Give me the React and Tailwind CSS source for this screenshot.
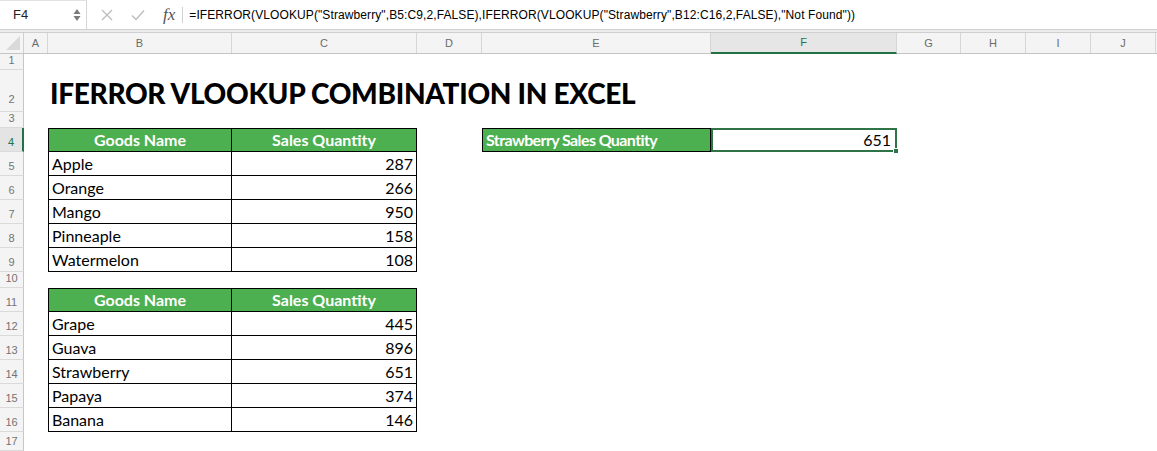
import React from "react";

const COLS = ["A", "B", "C", "D", "E", "F", "G", "H", "I", "J"];
const COLW = [
  "w-[24px]",
  "w-[184px]",
  "w-[185px]",
  "w-[65px]",
  "w-[229px]",
  "w-[186px]",
  "w-[64px]",
  "w-[65px]",
  "w-[65px]",
  "w-[65px]",
];

const table1 = [
  ["Apple", 287],
  ["Orange", 266],
  ["Mango", 950],
  ["Pinneaple", 158],
  ["Watermelon", 108],
];
const table2 = [
  ["Grape", 445],
  ["Guava", 896],
  ["Strawberry", 651],
  ["Papaya", 374],
  ["Banana", 146],
];

const sheetFont = { fontFamily: "Lato, 'Open Sans', sans-serif" };

function RowHeader({ label, h, active, tall }) {
  return (
    <div
      className={`${h} w-[24px] shrink-0 flex items-end justify-center text-[11px] leading-[16px] border-b border-[#dadada] ${
        tall ? "pb-[4px]" : "pb-[1px]"
      } ${
        active
          ? "bg-[#e4e4e4] text-[#217346] border-r-2 border-r-[#217346]"
          : "bg-[#f4f4f4] text-[#737373] border-r border-r-[#c6c6c6]"
      }`}
      style={{ fontFamily: "'Liberation Sans', Arial, sans-serif" }}
    >
      {label}
    </div>
  );
}

function EmptyCells({ from, to }) {
  const out = [];
  for (let i = from; i <= to; i++) {
    out.push(<div key={i} className={`${COLW[i]} shrink-0`} />);
  }
  return out;
}

function Row({ label, h, active, tall, children }) {
  return (
    <div className={`flex ${h}`}>
      <RowHeader label={label} h={h} active={active} tall={tall} />
      {children}
    </div>
  );
}

function HeaderCells() {
  return (
    <>
      <div className="w-[24px] shrink-0" />
      <div className="w-[184px] shrink-0 bg-[#4caf50] border border-black flex items-center justify-center text-white font-bold text-[16px]">
        Goods Name
      </div>
      <div className="w-[185px] shrink-0 bg-[#4caf50] border-y border-r border-black flex items-center justify-center text-white font-bold text-[16px]">
        Sales Quantity
      </div>
    </>
  );
}

function DataRow({ label, name, qty }) {
  return (
    <Row label={label} h="h-[24px]">
      <div className="w-[24px] shrink-0" />
      <div className="w-[184px] shrink-0 border-x border-b border-black flex items-center pl-[3px] text-[16px] text-black">
        {name}
      </div>
      <div className="w-[185px] shrink-0 border-r border-b border-black flex items-center justify-end pr-[3px] text-[16px] text-black">
        {qty}
      </div>
      <EmptyCells from={3} to={9} />
    </Row>
  );
}

function FormulaBar() {
  return (
    <div
      className="h-[30px] flex items-center bg-white border-b border-[#d0d0d0]"
      style={{ fontFamily: "'Liberation Sans', Arial, sans-serif" }}
    >
      <div className="w-[87px] h-full shrink-0 flex items-center justify-between pl-[13px] pr-[4px] border-r border-[#d6d6d6] border-t border-t-[#e2e2e2]">
        <span className="text-[13px] text-[#222]">F4</span>
        <svg width="10" height="16" viewBox="0 0 10 16">
          <path d="M5 2 L8.5 7 L1.5 7 Z" fill="#7a7a7a" />
          <path d="M5 14 L8.5 9 L1.5 9 Z" fill="#7a7a7a" />
        </svg>
      </div>
      <div className="flex items-center h-full">
        <svg className="ml-[14px]" width="12" height="12" viewBox="0 0 12 12">
          <path d="M1 1 L11 11 M11 1 L1 11" stroke="#bdbdbd" strokeWidth="1.4" />
        </svg>
        <svg className="ml-[18px]" width="14" height="12" viewBox="0 0 14 12">
          <path d="M1 6.5 L5 10.5 L13 1.5" stroke="#bdbdbd" strokeWidth="1.4" fill="none" />
        </svg>
        <span
          className="ml-[18px] text-[17px] italic text-[#555] leading-none"
          style={{ fontFamily: "'Liberation Serif', 'Times New Roman', serif" }}
        >
          fx
        </span>
        <div className="ml-[7px] h-[16px] w-px bg-[#d0d0d0]" />
        <span className="ml-[6px] text-[12px] text-black whitespace-nowrap tracking-[0.1px]">
          =IFERROR(VLOOKUP("Strawberry",B5:C9,2,FALSE),IFERROR(VLOOKUP("Strawberry",B12:C16,2,FALSE),"Not Found"))
        </span>
      </div>
    </div>
  );
}

function ColumnHeaders() {
  return (
    <div
      className="flex h-[21px] bg-[#f4f4f4] border-b border-[#c4c4c4]"
      style={{ fontFamily: "'Liberation Sans', Arial, sans-serif" }}
    >
      <div className="w-[24px] shrink-0 relative border-r border-[#d0d0d0] overflow-hidden">
        <svg className="absolute right-[3px] bottom-[3px]" width="14" height="14" viewBox="0 0 14 14">
          <path d="M14 0 L14 14 L0 14 Z" fill="#d9d9d9" />
        </svg>
      </div>
      {COLS.map((c, i) => {
        const active = c === "F";
        return (
          <div
            key={c}
            className={`${COLW[i]} shrink-0 flex items-center justify-center text-[11px] border-r border-[#d6d6d6] ${
              active
                ? "bg-[#e6e6e6] text-[#217346] border-b-2 border-b-[#217346] -mb-px"
                : "text-[#6b6b6b]"
            }`}
          >
            {c}
          </div>
        );
      })}
      <div className="flex-1" />
    </div>
  );
}

export default function App() {
  return (
    <div className="w-[1157px] h-[451px] overflow-hidden bg-white relative">
      <FormulaBar />
      <div className="h-[3px] bg-[#ececec] border-b border-[#cfcfcf]" />
      <ColumnHeaders />
      <div style={sheetFont}>
        <Row label="1" h="h-[16px]">
          <EmptyCells from={0} to={9} />
        </Row>
        <Row label="2" h="h-[42px]" tall>
          <div className="w-[24px] shrink-0" />
          <div className="w-[184px] shrink-0 relative">
            <span className="absolute left-[2px] bottom-[5px] whitespace-nowrap text-[28px] font-black text-black leading-none tracking-[-0.3px]">
              IFERROR VLOOKUP COMBINATION IN EXCEL
            </span>
          </div>
          <EmptyCells from={2} to={9} />
        </Row>
        <Row label="3" h="h-[16px]">
          <EmptyCells from={0} to={9} />
        </Row>
        <Row label="4" h="h-[24px]" active>
          <HeaderCells />
          <div className="w-[65px] shrink-0" />
          <div className="w-[229px] shrink-0 bg-[#4caf50] border border-black flex items-center pl-[3px] text-white font-bold text-[16px] whitespace-nowrap tracking-[-0.6px]">
            Strawberry Sales Quantity
          </div>
          <div className="w-[186px] shrink-0 relative border-2 border-[#2f7447] flex items-center justify-end pr-[4px] text-[16px] text-black">
            651
            <div className="absolute -right-[4px] -bottom-[4px] w-[6px] h-[6px] bg-[#2f7447] border border-white" />
          </div>
          <EmptyCells from={6} to={9} />
        </Row>
        {table1.map((r, i) => (
          <DataRow key={r[0]} label={String(5 + i)} name={r[0]} qty={r[1]} />
        ))}
        <Row label="10" h="h-[16px]">
          <EmptyCells from={0} to={9} />
        </Row>
        <Row label="11" h="h-[24px]">
          <HeaderCells />
          <EmptyCells from={3} to={9} />
        </Row>
        {table2.map((r, i) => (
          <DataRow key={r[0]} label={String(12 + i)} name={r[0]} qty={r[1]} />
        ))}
        <Row label="17" h="h-[19px]">
          <EmptyCells from={0} to={9} />
        </Row>
      </div>
    </div>
  );
}
